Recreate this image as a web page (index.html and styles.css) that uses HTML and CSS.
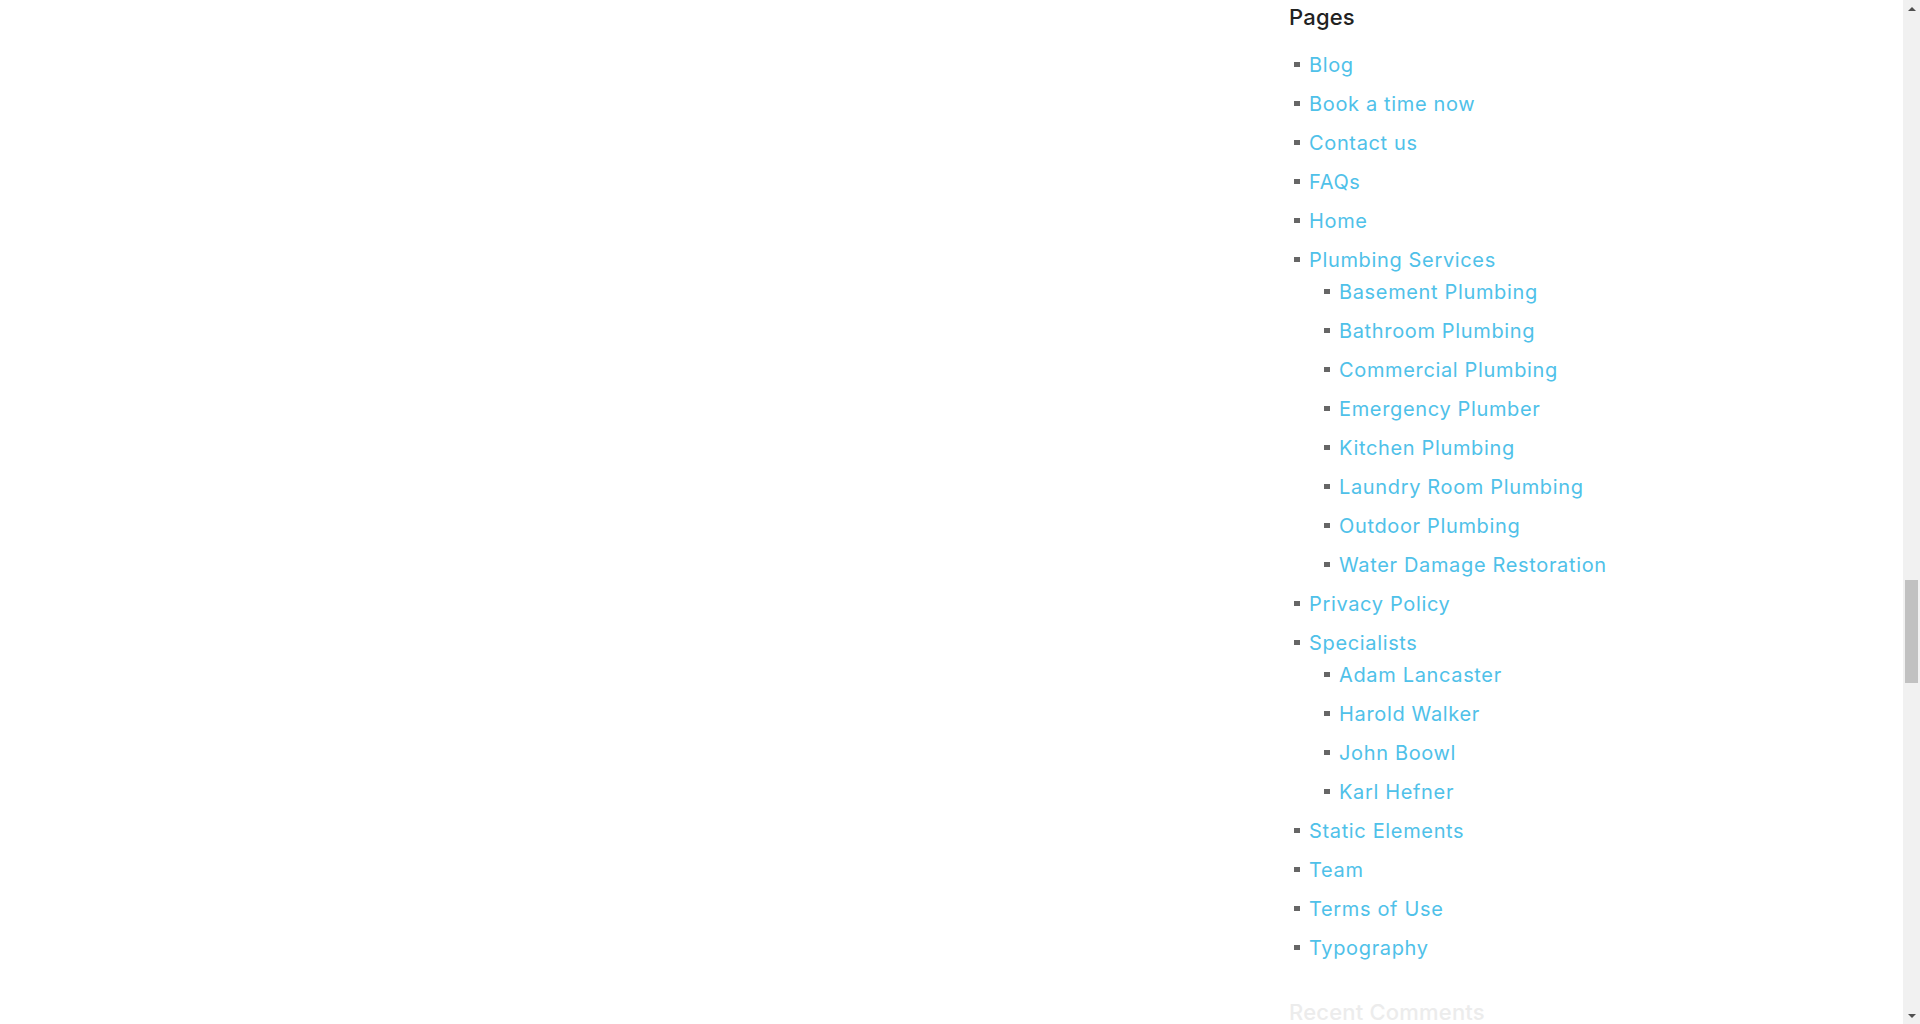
FILE: index.html
```html
<!DOCTYPE html>
<html lang="en">
<head>
<meta charset="utf-8">
<title>Pages</title>
<link rel="stylesheet" href="styles.css">
</head>
<body>
<div class="viewport">
  <div class="layout">
    <main class="content"></main>
    <aside class="sidebar">
      <section class="widget">
        <h3 class="widget-title">Pages</h3>
        <ul class="page-list">
          <li><a href="#">Blog</a></li>
          <li><a href="#">Book a time now</a></li>
          <li><a href="#">Contact us</a></li>
          <li><a href="#">FAQs</a></li>
          <li><a href="#">Home</a></li>
          <li><a href="#">Plumbing Services</a>
            <ul class="children">
              <li><a href="#">Basement Plumbing</a></li>
              <li><a href="#">Bathroom Plumbing</a></li>
              <li><a href="#">Commercial Plumbing</a></li>
              <li><a href="#">Emergency Plumber</a></li>
              <li><a href="#">Kitchen Plumbing</a></li>
              <li><a href="#">Laundry Room Plumbing</a></li>
              <li><a href="#">Outdoor Plumbing</a></li>
              <li><a href="#">Water Damage Restoration</a></li>
            </ul>
          </li>
          <li><a href="#">Privacy Policy</a></li>
          <li><a href="#">Specialists</a>
            <ul class="children">
              <li><a href="#">Adam Lancaster</a></li>
              <li><a href="#">Harold Walker</a></li>
              <li><a href="#">John Boowl</a></li>
              <li><a href="#">Karl Hefner</a></li>
            </ul>
          </li>
          <li><a href="#">Static Elements</a></li>
          <li><a href="#">Team</a></li>
          <li><a href="#">Terms of Use</a></li>
          <li><a href="#">Typography</a></li>
        </ul>
      </section>
      <section class="widget widget-faded">
        <h3 class="widget-title">Recent Comments</h3>
      </section>
    </aside>
  </div>
  <div class="scrollbar" aria-hidden="true">
    <div class="sb-btn sb-up"></div>
    <div class="sb-track"><div class="sb-thumb"></div></div>
    <div class="sb-btn sb-down"></div>
  </div>
</div>
</body>
</html>
```
FILE: styles.css
```css
html, body {
  margin: 0;
  padding: 0;
  height: 100%;
  background: #ffffff;
  overflow: hidden;
}

body {
  font-family: Inter, "Open Sans", "DejaVu Sans", sans-serif;
}

.viewport {
  display: flex;
  height: 1024px;
  overflow: hidden;
}

.layout {
  flex: 1;
  display: grid;
  grid-template-columns: 1290px 1fr;
  overflow: hidden;
}

.sidebar {
  padding-top: 2px;
}

.widget {
  margin: 0 0 33px 0;
}

.widget-title {
  margin: 0 0 17px -1px;
  font-size: 22px;
  line-height: 30px;
  font-weight: 500;
  letter-spacing: 0.2px;
  color: #222222;
}

.widget-faded .widget-title {
  color: #ececec;
}

.page-list,
.children {
  list-style: none;
  margin: 0;
  padding: 0;
}

.children {
  padding-left: 30px;
}

.page-list li {
  margin: 0 0 7px 0;
  font-size: 20px;
  line-height: 32px;
}

.page-list li::before {
  content: "";
  display: inline-block;
  width: 6px;
  height: 5px;
  margin: 0 9px 0 4px;
  background: #666666;
  vertical-align: 5px;
}

.page-list a {
  color: #4fc1e9;
  text-decoration: none;
  letter-spacing: 0.65px;
}

.scrollbar {
  flex: 0 0 17px;
  display: flex;
  flex-direction: column;
  background: #f1f1f1;
}

.sb-btn {
  flex: 0 0 17px;
  display: flex;
  align-items: center;
  justify-content: center;
}

.sb-btn::before {
  content: "";
  width: 0;
  height: 0;
  border-left: 4px solid transparent;
  border-right: 4px solid transparent;
}

.sb-up::before {
  border-bottom: 4px solid #505050;
}

.sb-down::before {
  border-top: 4px solid #505050;
}

.sb-track {
  flex: 1;
  padding: 0 2px;
}

.sb-thumb {
  margin-top: 563px;
  height: 103px;
  background: #c1c1c1;
}
```
